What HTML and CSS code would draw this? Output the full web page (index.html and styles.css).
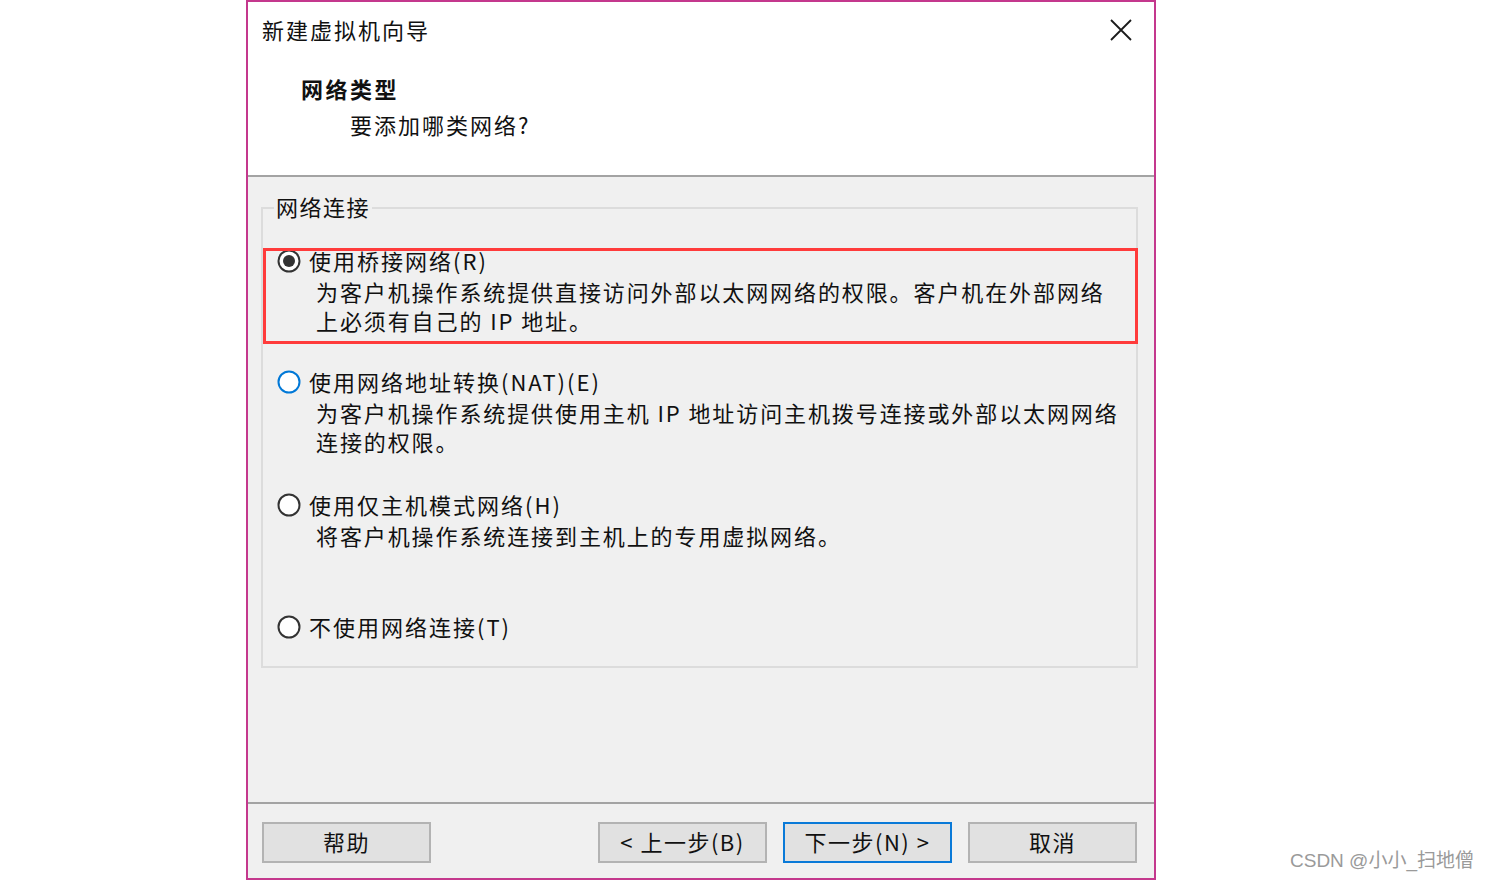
FILE: index.html
```html
<!DOCTYPE html>
<html lang="zh-CN">
<head>
<meta charset="utf-8">
<title>新建虚拟机向导</title>
<link rel="stylesheet" href="styles.css">
</head>
<body>
<div class="page">
  <div class="window">
    <div class="header">
      <div class="title-row">
        <span class="title">新建虚拟机向导</span>
        <svg class="close" width="22" height="22" viewBox="0 0 22 22"><path d="M1 1 L21 21 M21 1 L1 21" stroke="#1a1a1a" stroke-width="1.8" fill="none"/></svg>
      </div>
      <div class="heading">网络类型</div>
      <div class="subheading">要添加哪类网络?</div>
    </div>
    <div class="body">
      <div class="group">
        <span class="group-title">网络连接</span>
        <div class="options">
          <div class="option">
            <div class="opt-label">
              <svg class="radio" width="24" height="24" viewBox="0 0 24 24"><circle cx="12" cy="12" r="10.5" fill="#fff" stroke="#333" stroke-width="2"/><circle cx="12" cy="12" r="6" fill="#333"/></svg>
              <span>使用桥接网络(R)</span>
            </div>
            <div class="opt-desc">为客户机操作系统提供直接访问外部以太网网络的权限。客户机在外部网络<br>上必须有自己的 IP 地址。</div>
            <div class="mark"></div>
          </div>
          <div class="option">
            <div class="opt-label">
              <svg class="radio" width="24" height="24" viewBox="0 0 24 24"><circle cx="12" cy="12" r="10.5" fill="#fff" stroke="#0078d7" stroke-width="2"/></svg>
              <span>使用网络地址转换(NAT)(E)</span>
            </div>
            <div class="opt-desc">为客户机操作系统提供使用主机 IP 地址访问主机拨号连接或外部以太网网络<br>连接的权限。</div>
          </div>
          <div class="option">
            <div class="opt-label">
              <svg class="radio" width="24" height="24" viewBox="0 0 24 24"><circle cx="12" cy="12" r="10.5" fill="#fff" stroke="#333" stroke-width="2"/></svg>
              <span>使用仅主机模式网络(H)</span>
            </div>
            <div class="opt-desc">将客户机操作系统连接到主机上的专用虚拟网络。</div>
          </div>
          <div class="option">
            <div class="opt-label">
              <svg class="radio" width="24" height="24" viewBox="0 0 24 24"><circle cx="12" cy="12" r="10.5" fill="#fff" stroke="#333" stroke-width="2"/></svg>
              <span>不使用网络连接(T)</span>
            </div>
          </div>
        </div>
      </div>
    </div>
    <div class="footer">
      <button class="btn">帮助</button>
      <div class="spacer"></div>
      <button class="btn">&lt; 上一步(B)</button>
      <button class="btn btn-default">下一步(N) &gt;</button>
      <button class="btn">取消</button>
    </div>
  </div>
  <div class="watermark">CSDN @小小_扫地僧</div>
</div>
</body>
</html>
```
FILE: styles.css
```css
* { box-sizing: border-box; }
html, body { margin: 0; padding: 0; background: #fff; }
body {
  font-family: "Noto Sans CJK SC", "Noto Sans", sans-serif;
  color: #111;
}
.page {
  position: relative;
  width: 1485px;
  height: 882px;
  padding-left: 246px;
}
.window {
  width: 910px;
  height: 880px;
  border: 2px solid #c4388d;
  display: flex;
  flex-direction: column;
  background: #f0f0f0;
}
.header {
  height: 175px;
  background: #fff;
  border-bottom: 2px solid #a3a3a3;
  flex: none;
}
.title-row {
  display: flex;
  align-items: flex-start;
  justify-content: space-between;
  padding: 12px 22px 0 14px;
  height: 42px;
}
.title {
  font-size: 22px;
  line-height: 30px;
  letter-spacing: 2px;
}
.close { display: block; margin-top: 5px; }
.heading {
  margin-top: 29px;
  padding-left: 53px;
  font-size: 22px;
  line-height: 30px;
  font-weight: 700;
  letter-spacing: 2.5px;
}
.subheading {
  margin-top: 6px;
  padding-left: 102px;
  font-size: 22px;
  line-height: 30px;
  letter-spacing: 2px;
}
.body {
  flex: 1;
  padding: 30px 16px 0 13px;
  border-bottom: 2px solid #a3a3a3;
}
.group {
  position: relative;
  border: 2px solid #dcdcdc;
  padding: 36px 0 23px 0;
}
.group-title {
  position: absolute;
  top: -18px;
  left: 11px;
  padding: 0 2px;
  background: #f0f0f0;
  font-size: 22px;
  line-height: 30px;
  letter-spacing: 1.5px;
}
.options {
  display: grid;
  grid-template-rows: 121px 123px 122px auto;
}
.option {
  position: relative;
  padding-left: 14px;
}
.opt-label {
  display: flex;
  align-items: center;
  gap: 8px;
  height: 32px;
  font-size: 22px;
  letter-spacing: 2px;
}
.opt-label span { position: relative; top: -1px; }
.radio { display: block; flex: none; }
.opt-desc {
  margin-top: 0;
  padding-left: 39px;
  font-size: 22px;
  line-height: 29px;
  letter-spacing: 1.9px;
}
.mark {
  position: absolute;
  top: 3px;
  left: 0;
  right: -2px;
  height: 96px;
  border: 3px solid #ff3b3b;
}
.footer {
  flex: none;
  display: flex;
  gap: 16px;
  padding: 18px 17px 15px 14px;
}
.spacer { flex: 1; }
.btn {
  width: 169px;
  height: 41px;
  background: #e1e1e1;
  border: 2px solid #b3b3b3;
  font-family: "Noto Sans CJK SC", "Noto Sans", sans-serif;
  font-size: 22px;
  line-height: 33px;
  letter-spacing: 1.5px;
  color: #111;
  padding: 0 0 3px 0;
}
.btn-default { border-color: #0a7ad8; }
.watermark {
  position: absolute;
  left: 1290px;
  top: 849px;
  font-family: "Liberation Sans", "Noto Sans CJK SC", sans-serif;
  font-size: 19px;
  line-height: 24px;
  color: #9a9a9a;
}
```
